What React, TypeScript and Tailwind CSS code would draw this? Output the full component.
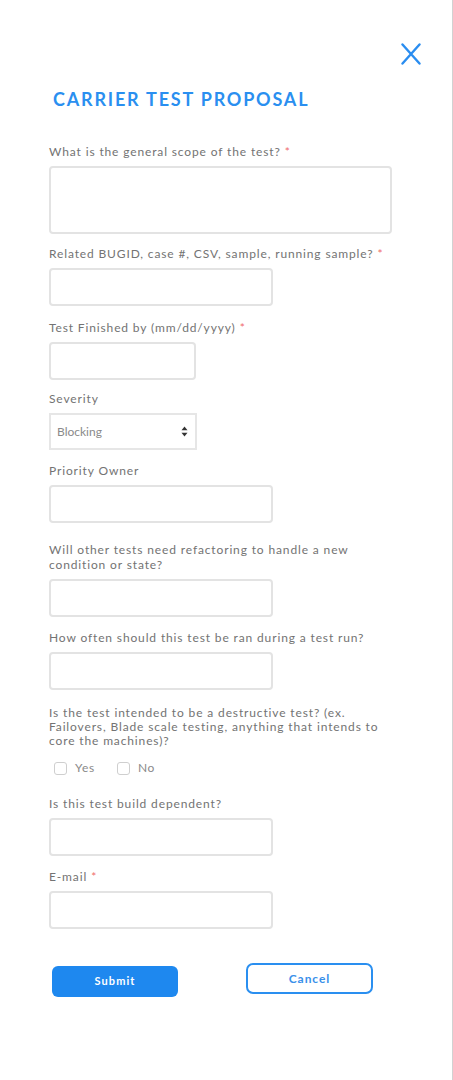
import React from "react";

const labelCls =
  "block w-[343px] text-[12px] leading-[14px] tracking-[0.072em] text-[#737373] font-normal mb-[7px]";
const inputCls =
  "block h-[38px] rounded-[4px] border-2 border-[#e3e3e3] bg-white outline-none";

function Req() {
  return <span className="text-[#f06b6b] ml-[4px]">*</span>;
}

export default function App() {
  return (
    <div
      className="w-full min-h-[1080px] bg-white border-r border-[#d2d2d2]"
      style={{ fontFamily: "Lato, 'Open Sans', sans-serif" }}
    >
      <div className="flex justify-end pr-[31px] pt-[43px]">
        <svg width="20" height="22" viewBox="0 0 20 22" fill="none">
          <path
            d="M1.5 1.5 L18.5 20.5 M18.5 1.5 L1.5 20.5"
            stroke="#2a8df0"
            strokeWidth="2.4"
            strokeLinecap="round"
          />
        </svg>
      </div>
      <h1 className="mt-[22px] pl-[53px] text-[18px] leading-[24px] font-bold tracking-[0.1em] text-[#2a8ff0]">
        CARRIER TEST PROPOSAL
      </h1>
      <form className="pl-[49px] pr-[20px]">
        <div className="mt-[34px]">
          <label className={labelCls}>
            What is the general scope of the test?<Req />
          </label>
          <textarea className="block w-[343px] h-[68px] rounded-[4px] border-2 border-[#e3e3e3] resize-none outline-none" />
        </div>
        <div className="mt-[13px]">
          <label className={labelCls}>
            Related BUGID, case #, CSV, sample, running sample?<Req />
          </label>
          <input className={`${inputCls} w-[224px]`} />
        </div>
        <div className="mt-[15px]">
          <label className={labelCls}>
            Test Finished by (mm/dd/yyyy)<Req />
          </label>
          <input className={`${inputCls} w-[147px]`} />
        </div>
        <div className="mt-[12px]">
          <label className={labelCls}>Severity</label>
          <div className="flex items-center justify-between w-[148px] h-[37px] border-2 border-[#e6e6e6] pl-[6px] pr-[7px]">
            <span className="text-[12px] text-[#8a8a8a]">Blocking</span>
            <svg width="7" height="11" viewBox="0 0 7 11">
              <path d="M3.5 0.5 L6.5 4.3 L0.5 4.3 Z" fill="#333" />
              <path d="M3.5 10.5 L6.5 6.7 L0.5 6.7 Z" fill="#333" />
            </svg>
          </div>
        </div>
        <div className="mt-[14px]">
          <label className={labelCls}>Priority Owner</label>
          <input className={`${inputCls} w-[224px]`} />
        </div>
        <div className="mt-[19px]">
          <label className={`${labelCls} !leading-[15px]`}>
            Will other tests need refactoring to handle a new condition or state?
          </label>
          <input className={`${inputCls} w-[224px]`} />
        </div>
        <div className="mt-[14px]">
          <label className={labelCls}>
            How often should this test be ran during a test run?
          </label>
          <input className={`${inputCls} w-[224px]`} />
        </div>
        <div className="mt-[16px]">
          <label className={`${labelCls} !mb-0`}>
            Is the test intended to be a destructive test? (ex. Failovers, Blade
            scale testing, anything that intends to core the machines)?
          </label>
          <div className="flex items-center mt-[12px] pl-[5px] h-[16px]">
            <span className="w-[13px] h-[13px] rounded-[3px] border border-[#cfcfcf]" />
            <span className="ml-[8px] text-[12px] tracking-[0.06em] text-[#8a8a8a]">Yes</span>
            <span className="ml-[22px] w-[13px] h-[13px] rounded-[3px] border border-[#cfcfcf]" />
            <span className="ml-[8px] text-[12px] tracking-[0.06em] text-[#8a8a8a]">No</span>
          </div>
        </div>
        <div className="mt-[21px]">
          <label className={labelCls}>Is this test build dependent?</label>
          <input className={`${inputCls} w-[224px]`} />
        </div>
        <div className="mt-[14px]">
          <label className={labelCls}>
            E-mail<Req />
          </label>
          <input className={`${inputCls} w-[224px]`} />
        </div>
        <div className="flex items-start mt-[34px] pl-[3px]">
          <button
            type="button"
            className="mt-[3px] w-[126px] h-[31px] rounded-[6px] bg-[#1e88ef] text-white text-[11px] font-bold tracking-[0.1em]"
          >
            Submit
          </button>
          <button
            type="button"
            className="ml-[68px] w-[127px] h-[31px] rounded-[7px] border-2 border-[#2a8ff0] bg-white text-[#3a90ea] text-[12px] font-bold tracking-[0.08em]"
          >
            Cancel
          </button>
        </div>
      </form>
    </div>
  );
}
